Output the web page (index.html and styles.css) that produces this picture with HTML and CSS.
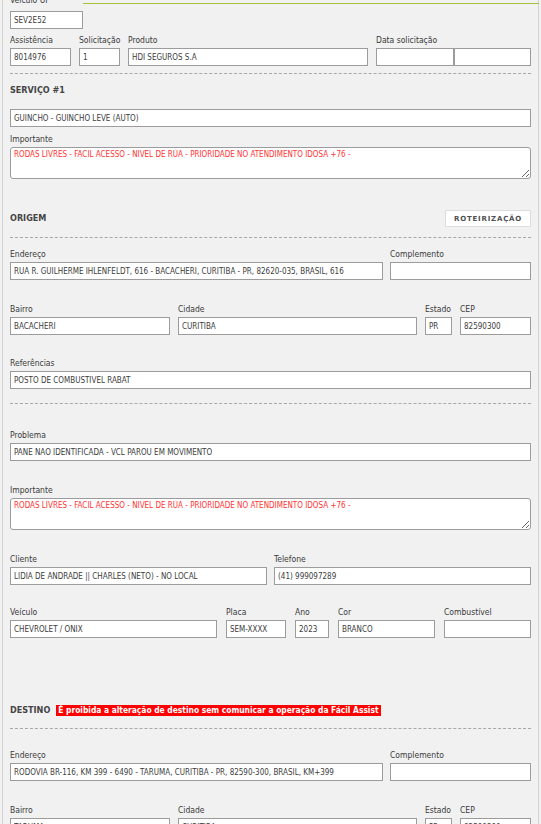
FILE: index.html
```html
<!DOCTYPE html>
<html lang="pt-BR">
<head>
    <meta charset="UTF-8">
    <meta name="viewport" content="width=device-width, initial-scale=1.0">
    <title>Atendimento - Serviço</title>
    <link rel="stylesheet" href="styles.css">
</head>
<body>
    <div class="topbar"></div>
    <div class="panel">
        <div class="field w-ops">
            <label>Veículo UF</label>
            <input type="text" value="SEV2E52" readonly>
        </div>

        <div class="row first-row">
            <div class="field w-assist">
                <label>Assistência</label>
                <input type="text" value="8014976" readonly>
            </div>
            <div class="field w-solic">
                <label>Solicitação</label>
                <input type="text" value="1" readonly>
            </div>
            <div class="field w-prod">
                <label>Produto</label>
                <input type="text" value="HDI SEGUROS S.A" readonly>
            </div>
            <div class="field w-date">
                <label>Data solicitação</label>
                <div class="pair">
                    <input type="text" value="" readonly>
                    <input type="text" value="" readonly>
                </div>
            </div>
        </div>

        <hr class="sep sep-top">

        <div class="section-title title-service">SERVIÇO #1</div>
        <input class="service-input" type="text" value="GUINCHO - GUINCHO LEVE (AUTO)" readonly>

        <div class="field imp-service">
            <label>Importante</label>
            <textarea class="alert-text" readonly>RODAS LIVRES - FACIL ACESSO - NIVEL DE RUA - PRIORIDADE NO ATENDIMENTO IDOSA +76 -</textarea>
        </div>

        <div class="section-head head-origin">
            <div class="section-title">ORIGEM</div>
            <button class="btn-route" type="button">ROTEIRIZAÇÃO</button>
        </div>

        <hr class="sep sep-origin">

        <div class="row addr-row">
            <div class="field w-addr">
                <label>Endereço</label>
                <input type="text" value="RUA R. GUILHERME IHLENFELDT, 616 - BACACHERI, CURITIBA - PR, 82620-035, BRASIL, 616" readonly>
            </div>
            <div class="field w-comp">
                <label>Complemento</label>
                <input type="text" value="" readonly>
            </div>
        </div>

        <div class="row city-row">
            <div class="field w-bairro">
                <label>Bairro</label>
                <input type="text" value="BACACHERI" readonly>
            </div>
            <div class="field w-city">
                <label>Cidade</label>
                <input type="text" value="CURITIBA" readonly>
            </div>
            <div class="field w-uf">
                <label>Estado</label>
                <input type="text" value="PR" readonly>
            </div>
            <div class="field w-cep">
                <label>CEP</label>
                <input type="text" value="82590300" readonly>
            </div>
        </div>

        <div class="field ref-row">
            <label>Referências</label>
            <input type="text" value="POSTO DE COMBUSTIVEL RABAT" readonly>
        </div>

        <hr class="sep sep-problem">

        <div class="field problem-row">
            <label>Problema</label>
            <input type="text" value="PANE NÃO IDENTIFICADA - VCL PAROU EM MOVIMENTO" readonly>
        </div>

        <div class="field imp-problem">
            <label>Importante</label>
            <textarea class="alert-text" readonly>RODAS LIVRES - FACIL ACESSO - NIVEL DE RUA - PRIORIDADE NO ATENDIMENTO IDOSA +76 -</textarea>
        </div>

        <div class="row client-row">
            <div class="field grow">
                <label>Cliente</label>
                <input type="text" value="LIDIA DE ANDRADE || CHARLES (NETO) - NO LOCAL" readonly>
            </div>
            <div class="field grow">
                <label>Telefone</label>
                <input type="text" value="(41) 999097289" readonly>
            </div>
        </div>

        <div class="row car-row">
            <div class="field w-car">
                <label>Veículo</label>
                <input type="text" value="CHEVROLET / ONIX" readonly>
            </div>
            <div class="field w-plate">
                <label>Placa</label>
                <input type="text" value="SEM-XXXX" readonly>
            </div>
            <div class="field w-year">
                <label>Ano</label>
                <input type="text" value="2023" readonly>
            </div>
            <div class="field w-color">
                <label>Cor</label>
                <input type="text" value="BRANCO" readonly>
            </div>
            <div class="field w-fuel">
                <label>Combustível</label>
                <input type="text" value="" readonly>
            </div>
        </div>

        <div class="section-head head-dest">
            <div class="section-title">DESTINO</div>
            <span class="warn">É proibida a alteração de destino sem comunicar a operação da Fácil Assist</span>
        </div>

        <hr class="sep sep-dest">

        <div class="row addr-row-dest">
            <div class="field w-addr">
                <label>Endereço</label>
                <input type="text" value="RODOVIA BR-116, KM 399 - 6490 - TARUMÃ, CURITIBA - PR, 82590-300, BRASIL, KM+399" readonly>
            </div>
            <div class="field w-comp">
                <label>Complemento</label>
                <input type="text" value="" readonly>
            </div>
        </div>

        <div class="row city-row">
            <div class="field w-bairro">
                <label>Bairro</label>
                <input type="text" value="TARUMÃ" readonly>
            </div>
            <div class="field w-city">
                <label>Cidade</label>
                <input type="text" value="CURITIBA" readonly>
            </div>
            <div class="field w-uf">
                <label>Estado</label>
                <input type="text" value="PR" readonly>
            </div>
            <div class="field w-cep">
                <label>CEP</label>
                <input type="text" value="82590300" readonly>
            </div>
        </div>
    </div>
</body>
</html>
```

FILE: styles.css
```css
body {
    margin: 0;
    background-color: #f1f1f1;
    font-family: "DejaVu Sans Condensed", "DejaVu Sans", sans-serif;
    color: #333;
}
.topbar {
    position: fixed;
    top: 3px;
    left: 83px;
    right: 2px;
    height: 1px;
    background: #a2c43a;
}
.panel {
    width: 537px;
    box-sizing: border-box;
    margin: -4px 0 0 2px;
    padding: 0 7px 60px 7px;
    border-left: 1px solid #d2d2d2;
    border-right: 1px solid #d2d2d2;
}
label {
    display: block;
    height: 15px;
    font-size: 8.5px;
    line-height: 15px;
    color: #3a3a3a;
    white-space: nowrap;
}
.w-ops label {
    line-height: 9px;
}
input, textarea {
    display: block;
    box-sizing: border-box;
    width: 100%;
    margin: 0;
    background: #fff;
    border: 1px solid #9c9c9c;
    font-family: "DejaVu Sans Condensed", "DejaVu Sans", sans-serif;
    font-size: 8px;
    color: #3c3c3c;
}
input {
    height: 18px;
    padding: 0 3px;
}
textarea {
    height: 32px;
    padding: 2px 3px;
    border-radius: 3px;
    line-height: 10px;
}
.alert-text {
    color: #ff3333;
}
.row {
    display: flex;
    gap: 8px;
}
.field {
    flex: none;
}
.pair {
    display: flex;
}
.w-ops { width: 73px; }
.w-assist { width: 61px; }
.w-solic { width: 41px; }
.w-prod { width: 240px; }
.w-date { width: 155px; }
.w-addr { width: 373px; }
.w-comp { width: 141px; }
.w-bairro { width: 160px; }
.w-city { width: 239px; }
.w-uf { width: 27px; }
.w-cep { width: 71px; }
.w-car { width: 207px; }
.w-plate { width: 60px; }
.w-year { width: 34px; }
.w-color { width: 97px; }
.w-fuel { width: 87px; }
.grow { flex: 1; }

.addr-row, .addr-row-dest { gap: 7px; }
.client-row { gap: 7px; }
.car-row { gap: 9px; }

.first-row { margin-top: 4px; }
.sep {
    border: 0;
    border-top: 1px dashed #a8a8a8;
    height: 0;
    margin: 0;
}
.sep-top { margin-top: 7px; }
.section-title {
    font-size: 9px;
    font-weight: bold;
    line-height: 15px;
    color: #444;
}
.title-service { margin-top: 9px; }
.service-input { margin-top: 11px; }
.imp-service { margin-top: 5px; }
.section-head {
    display: flex;
    align-items: center;
}
.head-origin {
    justify-content: space-between;
    margin-top: 31px;
}
.btn-route {
    width: 86px;
    height: 17px;
    padding: 0;
    background: #fff;
    border: 1px solid #dcdcdc;
    font-family: "DejaVu Sans", sans-serif;
    font-size: 7px;
    font-weight: bold;
    letter-spacing: 0.8px;
    color: #505050;
    cursor: pointer;
}
.sep-origin { margin-top: 10px; }
.addr-row { margin-top: 9px; }
.city-row { margin-top: 22px; }
.ref-row { margin-top: 21px; }
.sep-problem { margin-top: 14px; }
.problem-row { margin-top: 24px; }
.imp-problem { margin-top: 22px; }
.client-row { margin-top: 22px; }
.car-row { margin-top: 20px; }
.head-dest { margin-top: 65px; }
.warn {
    margin-left: 6px;
    padding: 0 2px;
    background: #ff0000;
    color: #fff;
    font-size: 8.4px;
    font-weight: bold;
    line-height: 11px;
}
.sep-dest { margin-top: 10px; }
.addr-row-dest { margin-top: 19px; }
```
